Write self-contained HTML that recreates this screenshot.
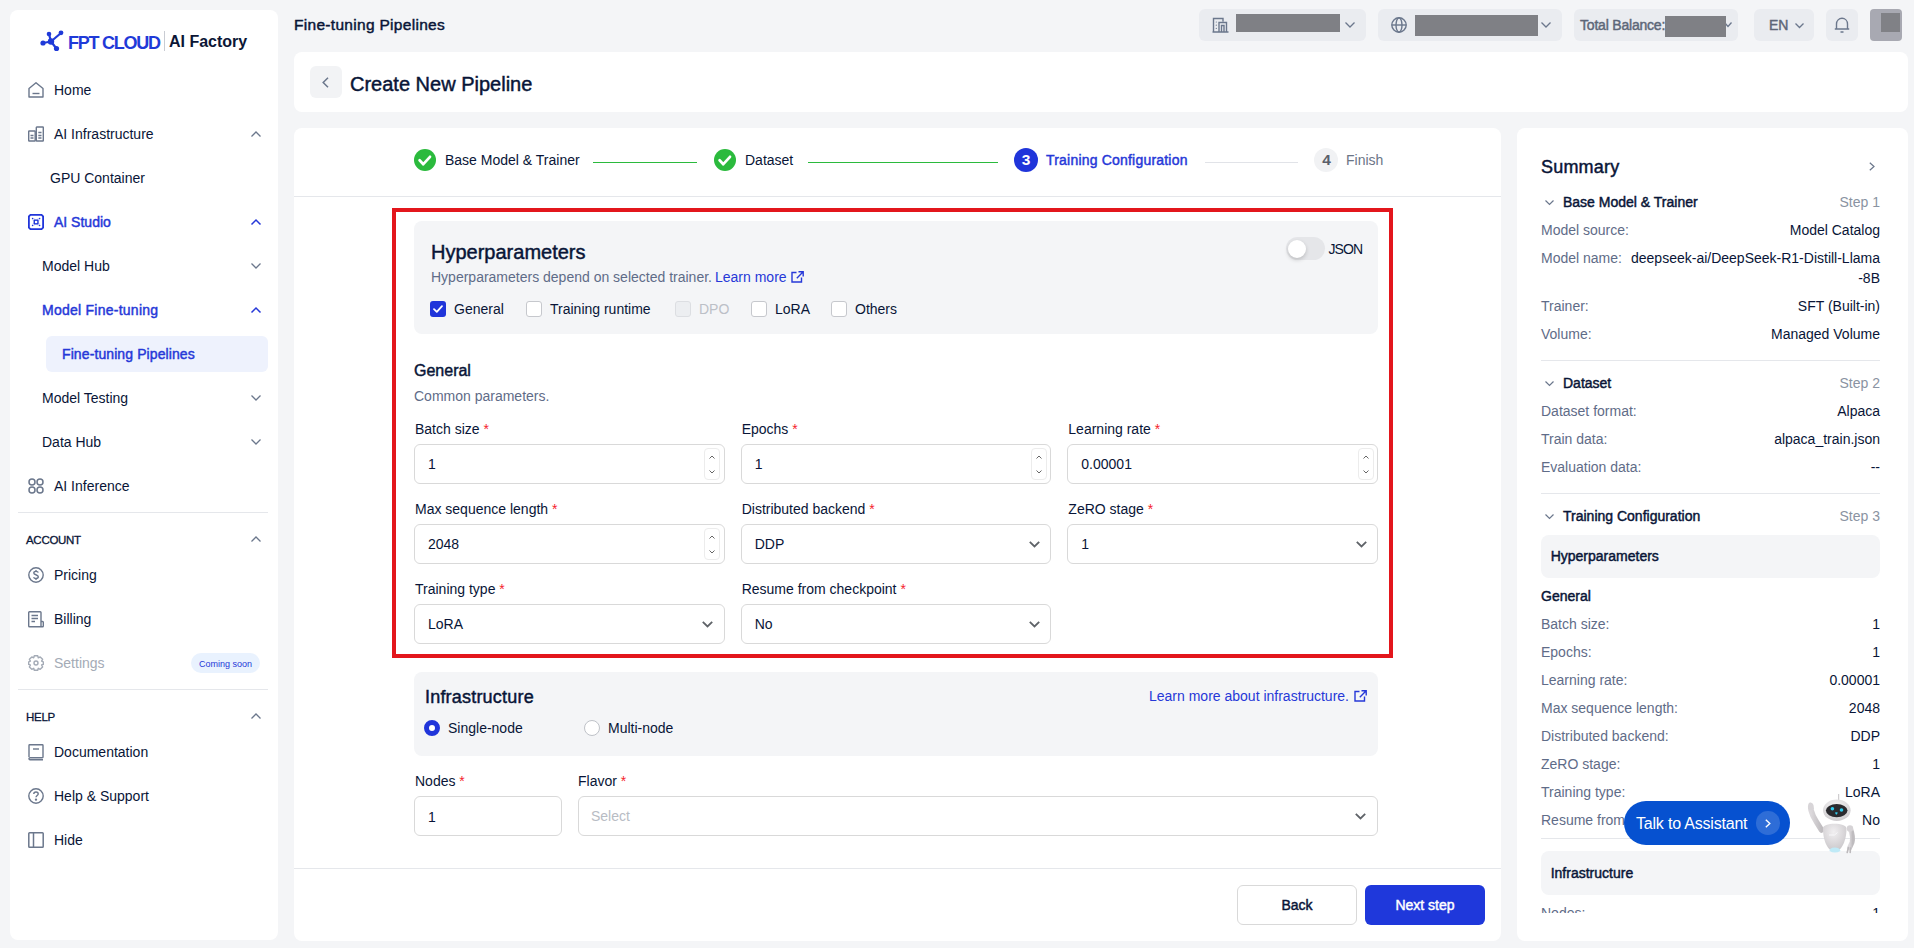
<!DOCTYPE html>
<html><head><meta charset="utf-8">
<style>
*{box-sizing:border-box;margin:0;padding:0}
html,body{width:1914px;height:948px;overflow:hidden}
body{background:#f4f5f7;font-family:"Liberation Sans",sans-serif;color:#091537;position:relative;-webkit-font-smoothing:antialiased}
.a{position:absolute}
.t{position:absolute;white-space:nowrap;font-size:14px;line-height:20px}
.card{position:absolute;background:#fff;border-radius:8px}
svg{position:absolute;overflow:visible}
.b{font-weight:700}
.sb{-webkit-text-stroke:0.45px currentColor}
.blue{color:#2638d8}
.gray{color:#5f6c88}
.sep{position:absolute;height:1px;background:#e5e7eb}
.inp{position:absolute;height:40px;border:1px solid #d9d9d9;border-radius:6px;background:#fff}
.lbl{position:absolute;white-space:nowrap;font-size:14px;line-height:20px}
.req{color:#f5222d}
</style></head><body>

<!-- SIDEBAR -->
<div class="card" style="left:10px;top:10px;width:268px;height:930px;"></div>
<!-- logo -->
<svg style="left:40px;top:30px" width="25" height="22" viewBox="0 0 25 22">
 <g fill="#1f3ad8" stroke="#1f3ad8" stroke-width="2.2" stroke-linecap="round">
  <line x1="3" y1="13" x2="11" y2="11.5"/><line x1="11" y1="11.5" x2="9" y2="4"/><line x1="11" y1="11.5" x2="21" y2="3"/><line x1="11" y1="11.5" x2="16" y2="18"/>
 </g>
 <g fill="#1f3ad8"><circle cx="3" cy="13" r="2.6"/><circle cx="9" cy="4" r="2.3"/><circle cx="21" cy="2.8" r="2.4"/><circle cx="16.5" cy="18.5" r="2.6"/><circle cx="11" cy="11.5" r="3.2"/></g>
</svg>
<div class="t b" style="left:68px;top:32.5px;font-size:18px;letter-spacing:-1.25px;color:#1f3ad8">FPT CLOUD</div>
<div class="a" style="left:164px;top:31px;width:1px;height:20px;background:#c9ccd3"></div>
<div class="t b" style="left:169px;top:32px;font-size:16px;color:#0b1636">AI Factory</div>

<!-- menu -->
<svg style="left:28px;top:82px" width="16" height="16" viewBox="0 0 16 16" fill="none" stroke="#6b778c" stroke-width="1.4"><path d="M1 6.5 L8 0.8 L15 6.5 V15 H1 Z" stroke-linejoin="round"/><path d="M4.5 11.5 H11.5"/></svg>
<div class="t" style="left:54px;top:80px">Home</div>

<svg style="left:28px;top:126px" width="16" height="16" viewBox="0 0 16 16" fill="none" stroke="#6b778c" stroke-width="1.4"><rect x="0.7" y="5" width="6.5" height="10" rx="0.5"/><rect x="8.3" y="1" width="7" height="14" rx="0.5"/><path d="M2.5 9.5 H5.5 M2.5 12 H5.5 M10.3 6.5 H13.5 M10.3 9.5 H13.5 M10.3 12 H13.5"/></svg>
<div class="t" style="left:54px;top:124px">AI Infrastructure</div>
<svg style="left:251px;top:131px" width="10" height="6" viewBox="0 0 10 6" fill="none" stroke="#6b778c" stroke-width="1.3"><path d="M0.5 5.5 L5 1 L9.5 5.5"/></svg>

<div class="t" style="left:50px;top:168px">GPU Container</div>

<svg style="left:28px;top:214px" width="16" height="16" viewBox="0 0 16 16" fill="none" stroke="#2035da"><path d="M2.4 0.9 H13.6 L15.1 2.4 V13.6 L13.6 15.1 H2.4 L0.9 13.6 V2.4 Z" stroke-width="1.8"/><rect x="6.3" y="6.2" width="3.6" height="3.6" stroke-width="1.3"/><g fill="#2035da" stroke="none"><circle cx="4.6" cy="4.5" r="0.8"/><circle cx="11.6" cy="4.5" r="0.8"/><circle cx="4.6" cy="11.5" r="0.8"/><circle cx="11.6" cy="11.5" r="0.8"/></g><path d="M4.6 5.5 L6.3 8 L4.6 10.5 M11.6 5.5 L9.9 8 L11.6 10.5 M5.6 4.5 L8 6.2 L10.6 4.5 M5.6 11.5 L8 9.8 L10.6 11.5" stroke-width="0.5" opacity="0.6"/></svg>
<div class="t sb blue" style="left:54px;top:212px">AI Studio</div>
<svg style="left:251px;top:219px" width="10" height="6" viewBox="0 0 10 6" fill="none" stroke="#2638d8" stroke-width="1.5"><path d="M0.5 5.5 L5 1 L9.5 5.5"/></svg>

<div class="t" style="left:42px;top:256px">Model Hub</div>
<svg style="left:251px;top:263px" width="10" height="6" viewBox="0 0 10 6" fill="none" stroke="#6b778c" stroke-width="1.3"><path d="M0.5 0.5 L5 5 L9.5 0.5"/></svg>

<div class="t sb blue" style="left:42px;top:300px;letter-spacing:0.25px">Model Fine-tuning</div>
<svg style="left:251px;top:307px" width="10" height="6" viewBox="0 0 10 6" fill="none" stroke="#2638d8" stroke-width="1.5"><path d="M0.5 5.5 L5 1 L9.5 5.5"/></svg>

<div class="a" style="left:46px;top:336px;width:222px;height:36px;background:#eef2fd;border-radius:6px"></div>
<div class="t sb blue" style="left:62px;top:344px;letter-spacing:0.1px">Fine-tuning Pipelines</div>

<div class="t" style="left:42px;top:388px">Model Testing</div>
<svg style="left:251px;top:395px" width="10" height="6" viewBox="0 0 10 6" fill="none" stroke="#6b778c" stroke-width="1.3"><path d="M0.5 0.5 L5 5 L9.5 0.5"/></svg>

<div class="t" style="left:42px;top:432px">Data Hub</div>
<svg style="left:251px;top:439px" width="10" height="6" viewBox="0 0 10 6" fill="none" stroke="#6b778c" stroke-width="1.3"><path d="M0.5 0.5 L5 5 L9.5 0.5"/></svg>

<svg style="left:28px;top:478px" width="16" height="16" viewBox="0 0 16 16" fill="none" stroke="#6b778c" stroke-width="1.5"><circle cx="4" cy="4" r="3"/><circle cx="12" cy="4" r="3"/><circle cx="4" cy="12" r="3"/><circle cx="12" cy="12" r="3"/></svg>
<div class="t" style="left:54px;top:476px">AI Inference</div>

<div class="sep" style="left:18px;top:512px;width:250px"></div>

<div class="t" style="left:26px;top:532.2px;font-size:11.5px;line-height:16px;letter-spacing:-0.3px;-webkit-text-stroke:0.3px currentColor">ACCOUNT</div>
<svg style="left:251px;top:536px" width="10" height="6" viewBox="0 0 10 6" fill="none" stroke="#6b778c" stroke-width="1.3"><path d="M0.5 5.5 L5 1 L9.5 5.5"/></svg>

<svg style="left:28px;top:567px" width="16" height="16" viewBox="0 0 16 16" fill="none" stroke="#6b778c" stroke-width="1.4"><circle cx="8" cy="8" r="7.2"/><path d="M10.3 5.6 C10 4.8 9.2 4.4 8 4.4 C6.6 4.4 5.8 5.1 5.8 6 C5.8 8.2 10.3 7.2 10.3 9.8 C10.3 10.8 9.4 11.5 8 11.5 C6.7 11.5 5.9 11 5.6 10.2 M8 3 V4.4 M8 11.5 V13"/></svg>
<div class="t" style="left:54px;top:565px">Pricing</div>

<svg style="left:28px;top:611px" width="16" height="17" viewBox="0 0 16 17" fill="none" stroke="#6b778c" stroke-width="1.4"><path d="M13 10.5 V1.5 Q13 0.7 12.2 0.7 H1.5 Q0.7 0.7 0.7 1.5 V15 Q0.7 15.8 1.5 15.8 H14.5 Q15.3 15.8 15.3 15 V11.3 Q15.3 10.5 14.5 10.5 H13 V15.8"/><path d="M3.5 4.5 H10 M3.5 7.5 H10 M3.5 10.5 H7"/></svg>
<div class="t" style="left:54px;top:609px">Billing</div>

<svg style="left:28px;top:655px" width="16" height="16" viewBox="0 0 16 16" fill="none" stroke="#a4abb6" stroke-width="1.4"><path d="M6.3 0.8 H9.7 L10.3 2.8 L12.2 1.9 L14.6 4.3 L13.6 6.2 L15.3 6.8 V9.4 L13.6 10 L14.6 11.9 L12.2 14.3 L10.3 13.3 L9.7 15.3 H6.3 L5.7 13.3 L3.8 14.3 L1.4 11.9 L2.4 10 L0.7 9.4 V6.8 L2.4 6.2 L1.4 4.3 L3.8 1.9 L5.7 2.8 Z" stroke-linejoin="round"/><circle cx="8" cy="8" r="2"/></svg>
<div class="t" style="left:54px;top:653px;color:#a4abb6">Settings</div>
<div class="a" style="left:191px;top:653px;width:69px;height:20px;border-radius:10px;background:#e9f2fe"></div>
<div class="t" style="left:199px;top:656.5px;font-size:9px;line-height:14px;color:#2638d8">Coming soon</div>

<div class="sep" style="left:18px;top:689px;width:250px"></div>

<div class="t" style="left:26px;top:709.2px;font-size:11.5px;line-height:16px;letter-spacing:-0.3px;-webkit-text-stroke:0.3px currentColor">HELP</div>
<svg style="left:251px;top:713px" width="10" height="6" viewBox="0 0 10 6" fill="none" stroke="#6b778c" stroke-width="1.3"><path d="M0.5 5.5 L5 1 L9.5 5.5"/></svg>

<svg style="left:28px;top:744px" width="16" height="17" viewBox="0 0 16 17" fill="none" stroke="#6b778c" stroke-width="1.4"><path d="M1 13 V1.5 Q1 0.8 1.7 0.8 H14.3 Q15 0.8 15 1.5 V13 Q15 13.7 14.3 13.7 H2 Q1 13.7 1 14.7 Q1 15.7 2 15.7 H15"/><path d="M5 5 H11"/></svg>
<div class="t" style="left:54px;top:742px">Documentation</div>

<svg style="left:28px;top:788px" width="16" height="16" viewBox="0 0 16 16" fill="none" stroke="#6b778c" stroke-width="1.4"><circle cx="8" cy="8" r="7.2"/><path d="M5.8 6 C5.8 4.8 6.8 4 8 4 C9.3 4 10.2 4.8 10.2 5.9 C10.2 7.4 8 7.6 8 9.3"/><circle cx="8" cy="11.6" r="0.5" fill="#6b778c"/></svg>
<div class="t" style="left:54px;top:786px">Help &amp; Support</div>

<svg style="left:28px;top:832px" width="16" height="16" viewBox="0 0 16 16" fill="none" stroke="#6b778c" stroke-width="1.5"><rect x="0.8" y="0.8" width="14.4" height="14.4" rx="0.8"/><path d="M5.5 0.8 V15.2"/></svg>
<div class="t" style="left:54px;top:830px">Hide</div>


<!-- TOP BAR -->
<div class="card" style="left:294px;top:52px;width:1614px;height:60px;"></div>
<div class="t sb" style="left:294px;top:15.2px;font-size:15.5px;letter-spacing:0.3px">Fine-tuning Pipelines</div>

<div class="a" style="left:1199px;top:9px;width:167px;height:32px;border-radius:6px;background:#eaecf0"></div>
<svg style="left:1212px;top:17px" width="17" height="16" viewBox="0 0 17 16" fill="none" stroke="#6b778c" stroke-width="1.4"><path d="M1.5 15 V1.5 H11 V4.5 M0.5 15 H16.5 M7 15 V5.5 H14.5 V15 M9.5 15 V8.5 H12 V15"/><circle cx="4.3" cy="5" r="0.6" fill="#6b778c" stroke="none"/><circle cx="4.3" cy="8.2" r="0.6" fill="#6b778c" stroke="none"/><circle cx="4.3" cy="11.4" r="0.6" fill="#6b778c" stroke="none"/></svg>
<div class="a" style="left:1236px;top:14px;width:104px;height:18px;background:#7f8085"></div>
<svg style="left:1345px;top:22px" width="10" height="6" viewBox="0 0 10 6" fill="none" stroke="#6b778c" stroke-width="1.3"><path d="M0.5 0.5 L5 5 L9.5 0.5"/></svg>

<div class="a" style="left:1378px;top:9px;width:184px;height:32px;border-radius:6px;background:#eaecf0"></div>
<svg style="left:1391px;top:17px" width="16" height="16" viewBox="0 0 16 16" fill="none" stroke="#6b778c" stroke-width="1.4"><circle cx="8" cy="8" r="7.2"/><ellipse cx="8" cy="8" rx="3" ry="7.2"/><path d="M0.8 8 H15.2"/></svg>
<div class="a" style="left:1415px;top:15px;width:123px;height:21px;background:#7f8085"></div>
<svg style="left:1541px;top:22px" width="10" height="6" viewBox="0 0 10 6" fill="none" stroke="#6b778c" stroke-width="1.3"><path d="M0.5 0.5 L5 5 L9.5 0.5"/></svg>

<div class="a" style="left:1574px;top:9px;width:164px;height:32px;border-radius:6px;background:#eaecf0"></div>
<div class="t sb" style="left:1580px;top:15px;color:#5d6778;letter-spacing:-0.2px">Total Balance:</div>
<svg style="left:1724px;top:22px" width="8" height="6" viewBox="0 0 8 6" fill="none" stroke="#6b778c" stroke-width="1.3"><path d="M0.5 0.5 L4 4.5 L7.5 0.5"/></svg>
<div class="a" style="left:1665px;top:16px;width:61px;height:21px;background:#7f8085"></div>

<div class="a" style="left:1754px;top:9px;width:60px;height:32px;border-radius:6px;background:#eaecf0"></div>
<div class="t sb" style="left:1769px;top:15px;color:#5d6778">EN</div>
<svg style="left:1795px;top:23px" width="9" height="5" viewBox="0 0 9 5" fill="none" stroke="#6b778c" stroke-width="1.3"><path d="M0.5 0.5 L4.5 4.5 L8.5 0.5"/></svg>

<div class="a" style="left:1826px;top:9px;width:32px;height:32px;border-radius:6px;background:#eaecf0"></div>
<svg style="left:1834px;top:17px" width="16" height="16" viewBox="0 0 16 16" fill="none" stroke="#6b778c" stroke-width="1.4"><path d="M2.5 11.5 V7 C2.5 3.6 5 1.3 8 1.3 C11 1.3 13.5 3.6 13.5 7 V11.5 M0.8 12 H15.2 M6.5 15 H9.5"/></svg>

<div class="a" style="left:1870px;top:9px;width:32px;height:32px;border-radius:4px;background:#a8a9b2"></div>
<div class="a" style="left:1881px;top:12.5px;width:19px;height:19.5px;background:#808186"></div>

<!-- header card content -->
<div class="a" style="left:310px;top:66px;width:32px;height:32px;border-radius:6px;background:#f2f3f5"></div>
<svg style="left:322px;top:77px" width="7" height="11" viewBox="0 0 7 11" fill="none" stroke="#6b778c" stroke-width="1.5"><path d="M6 0.8 L1.2 5.5 L6 10.2"/></svg>
<div class="t" style="left:350px;top:72px;font-size:20px;line-height:24px;-webkit-text-stroke:0.45px #091537">Create New Pipeline</div>



<!-- MAIN CARD -->
<div class="card" style="left:294px;top:128px;width:1207px;height:813px;"></div>
<!-- stepper -->
<svg style="left:414px;top:149px" width="22" height="22" viewBox="0 0 22 22"><circle cx="11" cy="11" r="11" fill="#2bba3d"/><path d="M5.6 11.3 L9.3 15.2 L16 7.8" fill="none" stroke="#fff" stroke-width="2.7" stroke-linecap="round" stroke-linejoin="round"/></svg>
<div class="t" style="left:445px;top:150px">Base Model &amp; Trainer</div>
<div class="a" style="left:593px;top:162px;width:104px;height:1px;background:#2bba3d"></div>
<svg style="left:714px;top:149px" width="22" height="22" viewBox="0 0 22 22"><circle cx="11" cy="11" r="11" fill="#2bba3d"/><path d="M5.6 11.3 L9.3 15.2 L16 7.8" fill="none" stroke="#fff" stroke-width="2.7" stroke-linecap="round" stroke-linejoin="round"/></svg>
<div class="t" style="left:745px;top:150px">Dataset</div>
<div class="a" style="left:808px;top:162px;width:190px;height:1px;background:#2bba3d"></div>
<div class="a" style="left:1014px;top:148px;width:24px;height:24px;border-radius:50%;background:#2035da"></div>
<div class="t b" style="left:1014px;top:150.2px;width:24px;text-align:center;color:#fff;font-size:15.5px">3</div>
<div class="t sb blue" style="left:1046px;top:150px;letter-spacing:0.2px">Training Configuration</div>
<div class="a" style="left:1205px;top:162px;width:93px;height:1px;background:#e1e3e8"></div>
<div class="a" style="left:1314px;top:148px;width:24px;height:24px;border-radius:50%;background:#f1f2f4"></div>
<div class="t b" style="left:1314.5px;top:150.2px;width:24px;text-align:center;color:#5b606b;font-size:15.5px">4</div>
<div class="t" style="left:1346px;top:150px;color:#6b7586">Finish</div>
<div class="sep" style="left:294px;top:196px;width:1207px"></div>

<!-- red highlight -->
<div class="a" style="left:392px;top:208px;width:1001px;height:450px;border:4px solid #e3161c"></div>

<!-- hyperparameters box -->
<div class="a" style="left:414px;top:221px;width:964px;height:113px;background:#f4f5f7;border-radius:8px"></div>
<div class="t sb" style="left:431px;top:240px;font-size:20px;line-height:24px">Hyperparameters</div>
<div class="t gray" style="left:431px;top:266.5px">Hyperparameters depend on selected trainer.</div>
<div class="t blue" style="left:715px;top:266.5px">Learn more</div>
<svg style="left:791px;top:271px" width="13" height="12" viewBox="0 0 13 12" fill="none" stroke="#2638d8" stroke-width="1.4"><path d="M5.5 1.5 H1 V11 H10.5 V6.5"/><path d="M7.5 0.8 H12.2 V5.5 M12.2 0.8 L5.8 7.2"/></svg>

<div class="a" style="left:430px;top:301px;width:16px;height:16px;border-radius:3px;background:#2035da"></div>
<svg style="left:430px;top:301px" width="16" height="16" viewBox="0 0 16 16"><path d="M4 8.2 L6.8 10.8 L12 5.2" fill="none" stroke="#fff" stroke-width="1.8" stroke-linecap="round" stroke-linejoin="round"/></svg>
<div class="t" style="left:454px;top:299px">General</div>
<div class="a" style="left:526px;top:301px;width:16px;height:16px;border-radius:3px;background:#fff;border:1px solid #c6c8cd"></div>
<div class="t" style="left:550px;top:299px">Training runtime</div>
<div class="a" style="left:675px;top:301px;width:16px;height:16px;border-radius:3px;background:#eceef1;border:1px solid #dcdee2"></div>
<div class="t" style="left:699px;top:299px;color:#bcc0c7">DPO</div>
<div class="a" style="left:751px;top:301px;width:16px;height:16px;border-radius:3px;background:#fff;border:1px solid #c6c8cd"></div>
<div class="t" style="left:775px;top:299px">LoRA</div>
<div class="a" style="left:831px;top:301px;width:16px;height:16px;border-radius:3px;background:#fff;border:1px solid #c6c8cd"></div>
<div class="t" style="left:855px;top:299px">Others</div>

<!-- toggle -->
<div class="a" style="left:1286px;top:237px;width:39px;height:23px;border-radius:12px;background:#e5e6e9"></div>
<div class="a" style="left:1288px;top:240px;width:18px;height:18px;border-radius:50%;background:#fff;box-shadow:0 2px 4px rgba(0,0,0,0.18)"></div>
<div class="t" style="left:1328.5px;top:239px;letter-spacing:-0.9px">JSON</div>

<!-- General -->
<div class="t sb" style="left:414px;top:361.4px;font-size:16px">General</div>
<div class="t gray" style="left:414px;top:385.7px">Common parameters.</div>
<div class="t" style="left:415.00px;top:418.6px">Batch size <span class="req">*</span></div>
<div class="inp" style="left:414.00px;top:444px;width:310.67px"></div>
<div class="t" style="left:428.00px;top:454px">1</div>
<div class="a" style="left:704.17px;top:448px;width:16px;height:32px;border:1px solid #ececec;border-radius:4px"></div>
<svg style="left:709.17px;top:455px" width="6" height="4" viewBox="0 0 6 4" fill="none" stroke="#666" stroke-width="1"><path d="M0.5 3.5 L3 1 L5.5 3.5"/></svg>
<svg style="left:709.17px;top:470px" width="6" height="4" viewBox="0 0 6 4" fill="none" stroke="#666" stroke-width="1"><path d="M0.5 0.5 L3 3 L5.5 0.5"/></svg>
<div class="t" style="left:741.67px;top:418.6px">Epochs <span class="req">*</span></div>
<div class="inp" style="left:740.67px;top:444px;width:310.67px"></div>
<div class="t" style="left:754.67px;top:454px">1</div>
<div class="a" style="left:1030.84px;top:448px;width:16px;height:32px;border:1px solid #ececec;border-radius:4px"></div>
<svg style="left:1035.84px;top:455px" width="6" height="4" viewBox="0 0 6 4" fill="none" stroke="#666" stroke-width="1"><path d="M0.5 3.5 L3 1 L5.5 3.5"/></svg>
<svg style="left:1035.84px;top:470px" width="6" height="4" viewBox="0 0 6 4" fill="none" stroke="#666" stroke-width="1"><path d="M0.5 0.5 L3 3 L5.5 0.5"/></svg>
<div class="t" style="left:1068.33px;top:418.6px">Learning rate <span class="req">*</span></div>
<div class="inp" style="left:1067.33px;top:444px;width:310.67px"></div>
<div class="t" style="left:1081.33px;top:454px">0.00001</div>
<div class="a" style="left:1357.50px;top:448px;width:16px;height:32px;border:1px solid #ececec;border-radius:4px"></div>
<svg style="left:1362.50px;top:455px" width="6" height="4" viewBox="0 0 6 4" fill="none" stroke="#666" stroke-width="1"><path d="M0.5 3.5 L3 1 L5.5 3.5"/></svg>
<svg style="left:1362.50px;top:470px" width="6" height="4" viewBox="0 0 6 4" fill="none" stroke="#666" stroke-width="1"><path d="M0.5 0.5 L3 3 L5.5 0.5"/></svg>
<div class="t" style="left:415.00px;top:498.6px">Max sequence length <span class="req">*</span></div>
<div class="inp" style="left:414.00px;top:524px;width:310.67px"></div>
<div class="t" style="left:428.00px;top:534px">2048</div>
<div class="a" style="left:704.17px;top:528px;width:16px;height:32px;border:1px solid #ececec;border-radius:4px"></div>
<svg style="left:709.17px;top:535px" width="6" height="4" viewBox="0 0 6 4" fill="none" stroke="#666" stroke-width="1"><path d="M0.5 3.5 L3 1 L5.5 3.5"/></svg>
<svg style="left:709.17px;top:550px" width="6" height="4" viewBox="0 0 6 4" fill="none" stroke="#666" stroke-width="1"><path d="M0.5 0.5 L3 3 L5.5 0.5"/></svg>
<div class="t" style="left:741.67px;top:498.6px">Distributed backend <span class="req">*</span></div>
<div class="inp" style="left:740.67px;top:524px;width:310.67px"></div>
<div class="t" style="left:754.67px;top:534px">DDP</div>
<svg style="left:1028.84px;top:540.5px" width="11" height="7" viewBox="0 0 11 7" fill="none" stroke="#5f6368" stroke-width="1.8"><path d="M0.8 0.8 L5.5 5.5 L10.2 0.8"/></svg>
<div class="t" style="left:1068.33px;top:498.6px">ZeRO stage <span class="req">*</span></div>
<div class="inp" style="left:1067.33px;top:524px;width:310.67px"></div>
<div class="t" style="left:1081.33px;top:534px">1</div>
<svg style="left:1355.50px;top:540.5px" width="11" height="7" viewBox="0 0 11 7" fill="none" stroke="#5f6368" stroke-width="1.8"><path d="M0.8 0.8 L5.5 5.5 L10.2 0.8"/></svg>
<div class="t" style="left:415.00px;top:578.6px">Training type <span class="req">*</span></div>
<div class="inp" style="left:414.00px;top:604px;width:310.67px"></div>
<div class="t" style="left:428.00px;top:614px">LoRA</div>
<svg style="left:702.17px;top:620.5px" width="11" height="7" viewBox="0 0 11 7" fill="none" stroke="#5f6368" stroke-width="1.8"><path d="M0.8 0.8 L5.5 5.5 L10.2 0.8"/></svg>
<div class="t" style="left:741.67px;top:578.6px">Resume from checkpoint <span class="req">*</span></div>
<div class="inp" style="left:740.67px;top:604px;width:310.67px"></div>
<div class="t" style="left:754.67px;top:614px">No</div>
<svg style="left:1028.84px;top:620.5px" width="11" height="7" viewBox="0 0 11 7" fill="none" stroke="#5f6368" stroke-width="1.8"><path d="M0.8 0.8 L5.5 5.5 L10.2 0.8"/></svg>

<!-- Infrastructure -->
<div class="a" style="left:414px;top:672px;width:964px;height:84px;background:#f4f5f7;border-radius:8px"></div>
<div class="t sb" style="left:425px;top:684.8px;font-size:18px;line-height:24px;letter-spacing:0.2px">Infrastructure</div>
<div class="a" style="left:424px;top:720px;width:16px;height:16px;border-radius:50%;border:5px solid #2035da;background:#fff"></div>
<div class="t" style="left:448px;top:718px">Single-node</div>
<div class="a" style="left:584px;top:720px;width:16px;height:16px;border-radius:50%;border:1px solid #bfc2c8;background:#fff"></div>
<div class="t" style="left:608px;top:718px">Multi-node</div>
<div class="t blue" style="left:1149px;top:685.7px">Learn more about infrastructure.</div>
<svg style="left:1354px;top:690px" width="13" height="12" viewBox="0 0 13 12" fill="none" stroke="#2638d8" stroke-width="1.4"><path d="M5.5 1.5 H1 V11 H10.5 V6.5"/><path d="M7.5 0.8 H12.2 V5.5 M12.2 0.8 L5.8 7.2"/></svg>

<div class="t" style="left:415px;top:770.7px">Nodes <span class="req">*</span></div>
<div class="inp" style="left:414px;top:796px;width:148px"></div>
<div class="t" style="left:428px;top:806.7px">1</div>
<div class="t" style="left:578px;top:770.7px">Flavor <span class="req">*</span></div>
<div class="inp" style="left:578px;top:796px;width:800px"></div>
<div class="t" style="left:591px;top:806px;color:#b8bcc4">Select</div>
<svg style="left:1355px;top:812.5px" width="11" height="7" viewBox="0 0 11 7" fill="none" stroke="#5f6368" stroke-width="1.8"><path d="M0.8 0.8 L5.5 5.5 L10.2 0.8"/></svg>

<!-- footer -->
<div class="sep" style="left:294px;top:868px;width:1207px"></div>
<div class="a" style="left:1237px;top:885px;width:120px;height:40px;border:1px solid #d9d9d9;border-radius:6px;background:#fff"></div>
<div class="t sb" style="left:1237px;top:895px;width:120px;text-align:center">Back</div>
<div class="a" style="left:1365px;top:885px;width:120px;height:40px;border-radius:6px;background:#1f38db"></div>
<div class="t sb" style="left:1365px;top:895px;width:120px;text-align:center;color:#fff">Next step</div>


<!-- SUMMARY CARD -->
<div class="card" style="left:1517px;top:128px;width:391px;height:813px;"></div>
<!--SUMMARY-->
<div class="t sb" style="left:1541px;top:154.5px;font-size:18px;line-height:24px;letter-spacing:0.2px">Summary</div>
<svg style="left:1869px;top:162px" width="6" height="9" viewBox="0 0 6 9" fill="none" stroke="#6b778c" stroke-width="1.2"><path d="M0.8 0.8 L5 4.5 L0.8 8.2"/></svg>
<svg style="left:1545px;top:199.8px" width="9" height="5" viewBox="0 0 9 5" fill="none" stroke="#6b778c" stroke-width="1.2"><path d="M0.5 0.5 L4.5 4.5 L8.5 0.5"/></svg>
<div class="t sb" style="left:1563px;top:192.0px">Base Model &amp; Trainer</div>
<div class="t" style="right:34px;top:192.0px;color:#8a93a2">Step 1</div>
<div class="t gray" style="left:1541px;top:219.7px">Model source:</div>
<div class="t" style="right:34px;top:219.7px;text-align:right">Model Catalog</div>
<div class="t gray" style="left:1541px;top:247.5px">Model name:</div>
<div class="t" style="right:34px;top:247.5px;text-align:right;line-height:20.2px">deepseek-ai/DeepSeek-R1-Distill-Llama<br>-8B</div>
<div class="t gray" style="left:1541px;top:295.9px">Trainer:</div>
<div class="t" style="right:34px;top:295.9px;text-align:right">SFT (Built-in)</div>
<div class="t gray" style="left:1541px;top:323.8px">Volume:</div>
<div class="t" style="right:34px;top:323.8px;text-align:right">Managed Volume</div>
<div class="sep" style="left:1541px;top:360px;width:339px"></div>
<svg style="left:1545px;top:381.0px" width="9" height="5" viewBox="0 0 9 5" fill="none" stroke="#6b778c" stroke-width="1.2"><path d="M0.5 0.5 L4.5 4.5 L8.5 0.5"/></svg>
<div class="t sb" style="left:1563px;top:373.2px">Dataset</div>
<div class="t" style="right:34px;top:373.2px;color:#8a93a2">Step 2</div>
<div class="t gray" style="left:1541px;top:401.2px">Dataset format:</div>
<div class="t" style="right:34px;top:401.2px;text-align:right">Alpaca</div>
<div class="t gray" style="left:1541px;top:429.0px">Train data:</div>
<div class="t" style="right:34px;top:429.0px;text-align:right">alpaca_train.json</div>
<div class="t gray" style="left:1541px;top:457.0px">Evaluation data:</div>
<div class="t" style="right:34px;top:457.0px;text-align:right">--</div>
<div class="sep" style="left:1541px;top:493px;width:339px"></div>
<svg style="left:1545px;top:513.8px" width="9" height="5" viewBox="0 0 9 5" fill="none" stroke="#6b778c" stroke-width="1.2"><path d="M0.5 0.5 L4.5 4.5 L8.5 0.5"/></svg>
<div class="t sb" style="left:1563px;top:506.0px">Training Configuration</div>
<div class="t" style="right:34px;top:506.0px;color:#8a93a2">Step 3</div>
<div class="a" style="left:1541px;top:534.5px;width:339px;height:43px;background:#f4f5f7;border-radius:8px"></div>
<div class="t sb" style="left:1550.7px;top:546.0px;">Hyperparameters</div>
<div class="t sb" style="left:1541px;top:585.7px;">General</div>
<div class="t gray" style="left:1541px;top:614.0px">Batch size:</div>
<div class="t" style="right:34px;top:614.0px;text-align:right">1</div>
<div class="t gray" style="left:1541px;top:642.0px">Epochs:</div>
<div class="t" style="right:34px;top:642.0px;text-align:right">1</div>
<div class="t gray" style="left:1541px;top:670.0px">Learning rate:</div>
<div class="t" style="right:34px;top:670.0px;text-align:right">0.00001</div>
<div class="t gray" style="left:1541px;top:698.0px">Max sequence length:</div>
<div class="t" style="right:34px;top:698.0px;text-align:right">2048</div>
<div class="t gray" style="left:1541px;top:726.0px">Distributed backend:</div>
<div class="t" style="right:34px;top:726.0px;text-align:right">DDP</div>
<div class="t gray" style="left:1541px;top:754.0px">ZeRO stage:</div>
<div class="t" style="right:34px;top:754.0px;text-align:right">1</div>
<div class="t gray" style="left:1541px;top:782.0px">Training type:</div>
<div class="t" style="right:34px;top:782.0px;text-align:right">LoRA</div>
<div class="t gray" style="left:1541px;top:810.0px">Resume from checkpoint:</div>
<div class="t" style="right:34px;top:810.0px;text-align:right">No</div>
<div class="sep" style="left:1541px;top:838px;width:339px"></div>
<div class="a" style="left:1541px;top:851px;width:339px;height:43.5px;background:#f4f5f7;border-radius:8px"></div>
<div class="t sb" style="left:1550.7px;top:862.6px;">Infrastructure</div>
<div class="a" style="left:1517px;top:895px;width:391px;height:18px;overflow:hidden">
<div class="t gray" style="left:24px;top:8px">Nodes:</div>
<div class="t" style="right:28px;top:8px">1</div>
</div>
<!--/SUMMARY-->
<div class="a" style="left:1623.5px;top:801px;width:166.5px;height:44px;border-radius:22px;background:#0651d0"></div>
<div class="t" style="left:1636px;top:813.7px;font-size:16px;color:#fff;letter-spacing:-0.2px">Talk to Assistant</div>
<div class="a" style="left:1756.3px;top:811.2px;width:23.5px;height:23.5px;border-radius:50%;background:rgba(255,255,255,0.16)"></div>
<svg style="left:1765px;top:818.5px" width="6" height="9" viewBox="0 0 6 9" fill="none" stroke="#fff" stroke-width="1.4"><path d="M0.8 0.8 L4.8 4.5 L0.8 8.2"/></svg>
<svg style="left:1800px;top:785px" width="65" height="75" viewBox="0 0 65 75">
 <defs>
  <radialGradient id="rg1" cx="0.45" cy="0.3" r="0.75"><stop offset="0" stop-color="#f6f5f6"/><stop offset="1" stop-color="#cdcacd"/></radialGradient>
  <radialGradient id="rg2" cx="0.45" cy="0.3" r="0.8"><stop offset="0" stop-color="#f1eff1"/><stop offset="1" stop-color="#c4c1c4"/></radialGradient>
  <linearGradient id="lg1" x1="0" y1="0" x2="1" y2="0"><stop offset="0" stop-color="#dcd9dc"/><stop offset="1" stop-color="#bfbcbf"/></linearGradient>
 </defs>
 <line x1="38.7" y1="9" x2="38.7" y2="15" stroke="#bdbbbe" stroke-width="0.9"/>
 <path d="M21.5 45 L16.5 37 Q12.5 31 11 25" stroke="url(#lg1)" stroke-width="5.5" fill="none" stroke-linecap="round"/>
 <path d="M8 24 Q7.5 18 10 17.5 Q12.5 17 13.5 20 L14 24 Q11 26.5 8 24 Z" fill="#d8d5d8"/>
 <path d="M50.5 44 Q53.5 52 52 57.5 L49.5 63" stroke="url(#lg1)" stroke-width="5" fill="none" stroke-linecap="round"/>
 <path d="M48.5 62.5 L47.2 67.5 M50.5 63 L50.2 67.5" stroke="#bcb9bc" stroke-width="1.6" stroke-linecap="round"/>
 <path d="M23 43.5 C22 37 47 37 46.5 43.5 C46.5 55 42 66.5 34.8 66.5 C27.5 66.5 23 55 23 43.5 Z" fill="url(#rg2)"/>
 <circle cx="50" cy="43.5" r="3.2" fill="#d6d3d6"/>
 <path d="M29.5 66 Q34.8 69 40.5 66 Q40 62.5 34.8 62.5 Q29.5 62.5 29.5 66 Z" fill="#bfeaf7"/>
 <path d="M29 50 H34.5 L37.5 47.5" stroke="#f8f8fa" stroke-width="1" fill="none"/>
 <ellipse cx="36.8" cy="25.3" rx="13.8" ry="10.7" fill="url(#rg1)"/>
 <ellipse cx="36.7" cy="25.6" rx="10.8" ry="6.6" fill="#2b2b2f"/>
 <circle cx="32.4" cy="23.8" r="1.8" fill="#2fcdf0"/>
 <circle cx="41.5" cy="25" r="1.8" fill="#2fcdf0"/>
 <path d="M35 27.6 Q36.4 26.8 37.8 27.6 Q37.2 29.6 36.4 29.8 Q35.6 29.6 35 27.6 Z" fill="#2fcdf0"/>
</svg>


</body></html>
